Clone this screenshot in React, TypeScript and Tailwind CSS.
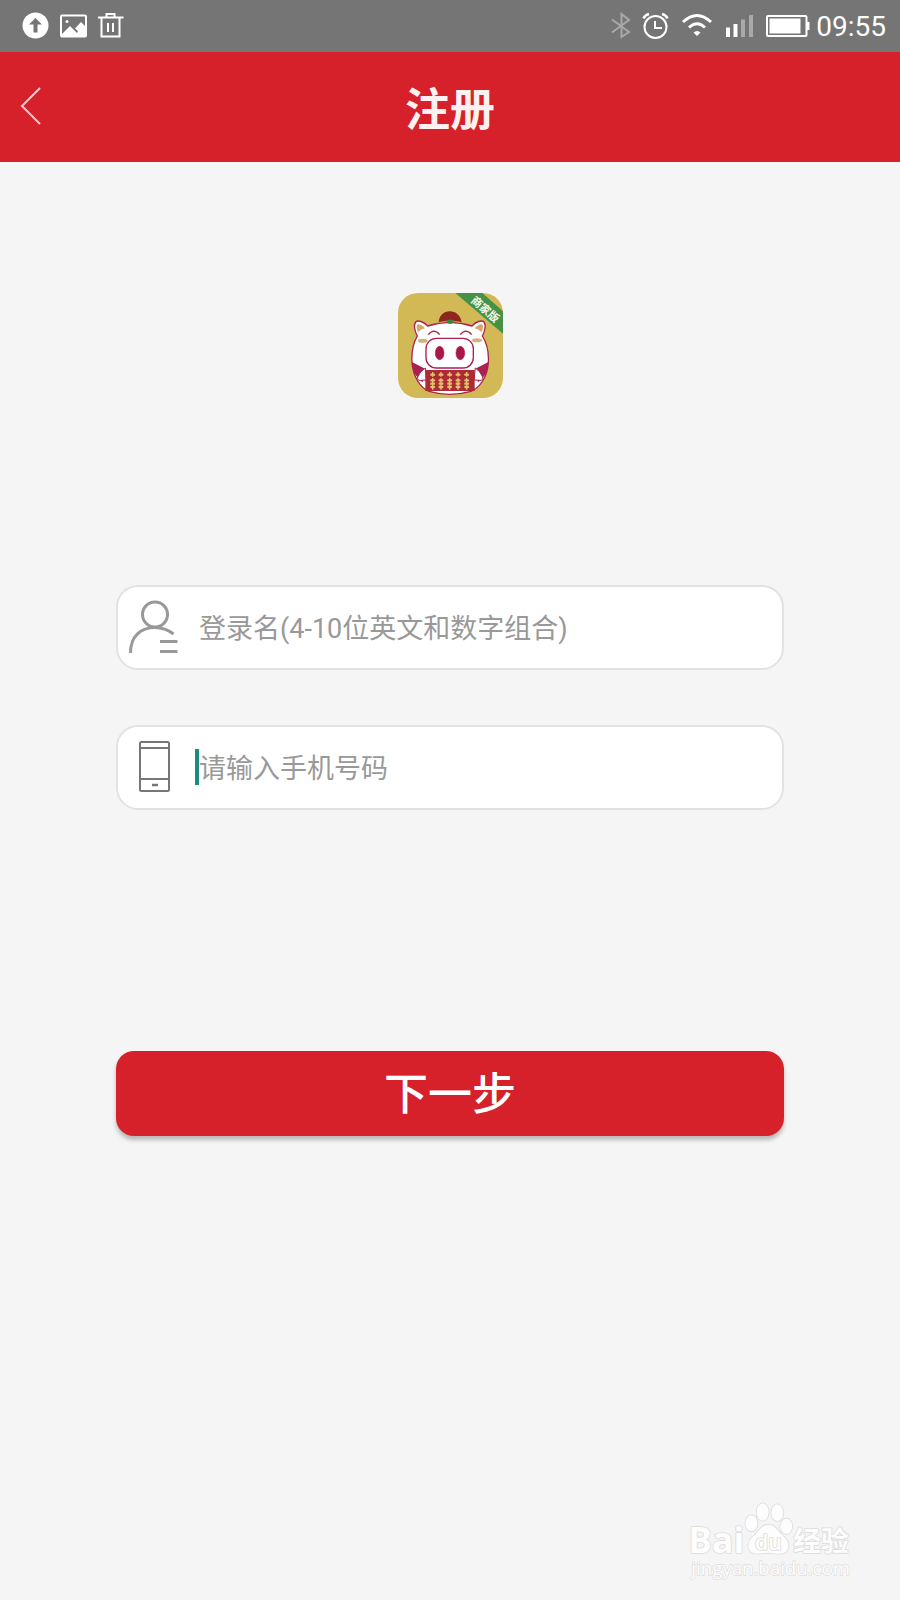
import type { ReactNode } from "react"

function StatusBar() {
  return (
    <div className="flex h-[52px] items-center justify-between bg-[#757575] pr-[14px] pl-[22px] text-white">
      <div className="flex items-center gap-[10px]">
        <svg width="28" height="28" viewBox="0 0 28 28">
          <circle cx="13.500" cy="13.500" r="13" fill="#fff" />
          <path d="M13.500 6 L20 12.500 H15.500 V20.500 H11.500 V12.500 H7 Z" fill="#757575" />
        </svg>
        <svg width="28" height="28" viewBox="0 0 28 28" fill="none">
          <rect x="1" y="3.500" width="25" height="21" rx="1" stroke="#fff" strokeWidth="2" />
          <circle cx="7" cy="9.500" r="1.500" fill="#fff" />
          <path d="M2 22 L10 14 L17 21 L18 19 L15 16.500 L21 10 L26 15 V24 H2 Z" fill="#fff" />
        </svg>
        <svg width="28" height="28" viewBox="0 0 28 28" fill="none" stroke="#fff" strokeWidth="2">
          <path d="M0 5.500 H25.500 M3.500 5.500 V24.500 H21.500 V5.500 M8.500 5.500 V2 H16.500 V5.500" />
          <path d="M10 11 V20 M15 11 V20" />
        </svg>
      </div>
      <div className="flex items-center">
        <svg className="mr-[11px]" width="20" height="28" viewBox="0 0 20 28" fill="none" stroke="#a9a9a9" strokeWidth="2">
          <path d="M1 7.500 L18 20 L10.500 25 V2 L18 8 L1 20.500" />
        </svg>
        <svg className="mr-[12px]" width="27" height="28" viewBox="0 0 27 28" fill="none" stroke="#fff" strokeWidth="2">
          <circle cx="13.500" cy="15" r="11" />
          <path d="M13 9 V16 H20" />
          <path d="M1.500 6.500 Q3 3 7 2 M25.500 6.500 Q24 3 20 2" strokeWidth="2.500" />
        </svg>
        <svg className="mr-[13px]" width="32" height="28" viewBox="0 0 32 28" fill="none" stroke="#fff" strokeWidth="3">
          <path d="M2 10 Q16 -3 30 10" />
          <path d="M8 15.500 Q16 8 24 15.500" />
          <path d="M16 24 L12.500 20.500 Q16 17.500 19.500 20.500 Z" fill="#fff" stroke="none" />
        </svg>
        <svg className="mr-[13px]" width="27" height="28" viewBox="0 0 27 28">
          <path d="M0 15.500 H4 V25 H0 Z M7.500 12 H11.500 V25 H7.500 Z" fill="#fff" />
          <path d="M15 7.500 H19 V25 H15 Z M23 3 H27 V25 H23 Z" fill="#a9a9a9" />
        </svg>
        <svg className="mr-[6px]" width="44" height="28" viewBox="0 0 44 28" fill="none">
          <rect x="1" y="4" width="39.500" height="20" rx="1" stroke="#fff" strokeWidth="2" />
          <path d="M3.500 6.500 H34.500 V21.500 H3.500 Z M41 10 H43.500 V18 H41 Z" fill="#fff" />
        </svg>
        <span className="pt-[2px] text-[28px] leading-[32px]">09:55</span>
      </div>
    </div>
  )
}

function PigLogo() {
  return (
    <svg
      className="h-[105px] w-[105px] overflow-hidden rounded-[20px]"
      viewBox="39 39 315 315"
      fill="none"
      role="img"
      aria-label="商家版"
    >
      <rect x="39" y="39" width="315" height="315" fill="#d3b955" />
      <path d="M211 39 H292 L354 94 V161 Z" fill="#459148" />
      <text
        transform="translate(300 89) rotate(41)"
        textAnchor="middle"
        dominantBaseline="central"
        fontSize="33"
        fontWeight="700"
        fill="#f2f8ee"
      >
        商家版
      </text>
      <g stroke="#a92150" strokeWidth="4">
        {/* ears and body */}
        <path
          d="M97 168 C88 152 86 134 92 126 C99 119 116 125 128 138 Q194 116 261 138 C272 125 290 119 297 126 C303 134 301 152 292 168 C306 190 312 218 310 248 C307 290 286 322 258 334 Q194 352 132 334 C104 322 85 290 81 248 C79 218 84 190 97 168 Z"
          fill="#fff"
        />
        <path d="M81 246 L120 266 L113 307 C91 290 80 269 81 246 Z M310 246 L271 266 L279 307 C300 291 311 271 310 246 Z" fill="#a92150" stroke="none" />
        <path d="M99 157 Q91 138 98 133 Q108 131 120 145 Q106 148 99 157 Z M290 157 Q298 138 291 133 Q281 131 269 145 Q283 148 290 157 Z" fill="#d8a86c" stroke="none" />
        <ellipse cx="113" cy="182" rx="15" ry="6" fill="#d8b07a" stroke="none" />
        <ellipse cx="276" cy="181" rx="15" ry="6" fill="#d8b07a" stroke="none" />
        <path d="M130 164 Q147 143 164 164 M226 164 Q243 143 260 164" />
        <rect x="123" y="175" width="142" height="89" rx="31" fill="#fff" />
        <ellipse cx="164" cy="219" rx="13" ry="20" fill="#a91647" strokeWidth="2" />
        <ellipse cx="226" cy="219" rx="13" ry="20" fill="#a91647" strokeWidth="2" />
      </g>
      <path d="M161 128 C162 82 226 82 230 128 Q195 120 161 128 Z" fill="#8e251f" />
      <path d="M161 126 Q195 118 230 126 V130 Q195 122 161 130 Z" fill="#d98a49" />
      <path d="M184 121 Q195 116 207 121 L203 130 Q195 134 187 130 Z" fill="#38883c" />
      {/* hands and abacus */}
      <g fill="#fff" stroke="#a92150" strokeWidth="3">
        <path d="M121 264 Q105 274 98 291 Q96 302 107 301 L124 300 Z" />
        <path d="M271 264 Q286 274 293 291 Q295 302 284 301 L267 300 Z" />
      </g>
      <rect x="121" y="270" width="148" height="63" fill="#ad2a37" />
      {[143, 168, 194, 219, 245].map((x) => (
        <g key={x} stroke="#e3c06c">
          <path d={`M${x} 276 V329`} strokeWidth="4" />
          <path
            d={`M${x - 4} 284 H${x + 4} M${x - 4} 301 H${x + 4} M${x - 4} 311 H${x + 4} M${x - 4} 321 H${x + 4}`}
            strokeWidth="7"
            strokeLinecap="round"
          />
        </g>
      ))}
      <path d="M123 292 H267" stroke="#ad2a37" strokeWidth="4" />
    </svg>
  )
}

type FieldProps = {
  id: string
  type: string
  placeholder: string
  icon: ReactNode
  caret?: boolean
}

function Field({ id, type, placeholder, icon, caret }: FieldProps) {
  return (
    <div className="flex h-[85px] items-center rounded-[22px] border-2 border-[#e2e2e2] bg-white pl-[10px]">
      <label htmlFor={id} aria-label={placeholder} className="shrink-0">
        {icon}
      </label>
      <div className="relative ml-[17px] flex-1">
        <input
          id={id}
          type={type}
          placeholder={placeholder}
          className="block w-full bg-transparent pt-[2px] text-[27px] leading-[40px] text-gray-700 outline-none placeholder:text-[#999999]"
        />
        {caret && <span className="absolute top-[2px] -left-1 h-[36px] w-1 bg-[#1a8d80]" />}
      </div>
    </div>
  )
}

function UserIcon() {
  return (
    <svg width="54" height="56" viewBox="0 0 54 56" fill="none" stroke="#999" strokeWidth="3">
      <circle cx="27" cy="14.500" r="12.500" />
      <path d="M2.500 53 C2.500 36 13 27.500 27 27.500 Q37 27.500 45.500 34" />
      <path d="M32 41.500 H49.500 M32 51.500 H49.500" />
    </svg>
  )
}

function PhoneIcon() {
  return (
    <svg width="54" height="56" viewBox="0 0 54 56" fill="none" stroke="#777" strokeWidth="2">
      <rect x="12" y="2" width="29" height="49" rx="1.500" />
      <path d="M12 8 H41 M12 39 H41" />
      <path d="M24 45 H30" strokeWidth="2.500" />
    </svg>
  )
}

function Watermark() {
  return (
    <svg
      className="w-[210px] font-['Open_Sans','Noto_Sans_CJK_SC',sans-serif]"
      viewBox="0 0 630 330"
      fill="#fdfdfd"
      stroke="#dcdcdc"
      strokeWidth="5"
      paintOrder="stroke"
      strokeLinejoin="round"
    >
      <text x="55" y="218" fontSize="106" fontWeight="700">
        Bai
      </text>
      <ellipse cx="244" cy="130" rx="18" ry="24" />
      <ellipse cx="278" cy="96" rx="18" ry="26" />
      <ellipse cx="322" cy="98" rx="18" ry="25" />
      <ellipse cx="349" cy="139" rx="18" ry="23" />
      <path d="M295 134 C315 134 323 153 337 166 C359 184 361 205 346 217 C331 226 315 218 295 218 C275 218 257 226 243 216 C229 202 233 182 253 166 C267 153 275 134 295 134 Z" />
      <text x="295" y="209" fontSize="64" textAnchor="middle" fontWeight="600">
        du
      </text>
      <text x="370" y="212" fontSize="83" fontWeight="700">
        经验
      </text>
      <text x="64" y="284" fontSize="56" strokeWidth="4">
        jingyan.baidu.com
      </text>
    </svg>
  )
}

export default function App() {
  return (
    <div className="flex min-h-screen flex-col bg-[#f5f5f5] font-[Roboto,'Noto_Sans_CJK_SC',sans-serif]">
      <StatusBar />

      <header className="grid h-[110px] grid-cols-[80px_1fr_80px] items-center bg-[#d6202a]">
        <button type="button" aria-label="返回" className="flex h-full items-center pb-[2px] pl-[20px]">
          <svg width="24" height="40" viewBox="0 0 24 40" fill="none" stroke="#fbc9cc" strokeWidth="2">
            <path d="M20 2 L2 20 L20 38" />
          </svg>
        </button>
        <h1 className="pt-2 text-center text-[45px] leading-[64px] font-bold text-[#fff0f1]">注册</h1>
      </header>

      <main className="flex flex-col px-[116px] pt-[131px]">
        <div className="flex justify-center">
          <PigLogo />
        </div>

        <form className="mt-[187px] flex flex-col" onSubmit={(e) => e.preventDefault()}>
          <div className="flex flex-col gap-[55px]">
            <Field id="username" type="text" placeholder="登录名(4-10位英文和数字组合)" icon={<UserIcon />} />
            <Field id="phone" type="tel" placeholder="请输入手机号码" icon={<PhoneIcon />} caret />
          </div>
          <button
            type="submit"
            className="mt-[241px] h-[85px] rounded-[18px] bg-[#d6202a] pt-[2px] text-[44px] leading-[64px] font-medium text-white shadow-[0_4px_4px_rgba(0,0,0,0.25)]"
          >
            下一步
          </button>
        </form>
      </main>

      <footer className="mt-auto flex justify-end pr-[20px] pb-[10px]">
        <Watermark />
      </footer>
    </div>
  )
}
